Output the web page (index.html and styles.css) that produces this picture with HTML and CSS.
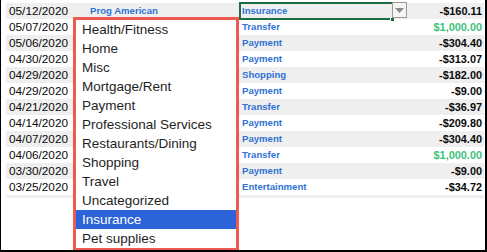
FILE: index.html
```html
<!DOCTYPE html>
<html>
<head>
<meta charset="utf-8">
<link rel="stylesheet" href="styles.css">
</head>
<body>
<div class="frame">
  <div class="sheet">
    <div class="row odd"><span class="date">05/12/2020</span><span class="name">Prog American</span><span class="cat">Insurance</span><span class="amt">-$160.11</span></div>
    <div class="row"><span class="date">05/07/2020</span><span class="name"></span><span class="cat">Transfer</span><span class="amt pos">$1,000.00</span></div>
    <div class="row odd"><span class="date">05/06/2020</span><span class="name"></span><span class="cat">Payment</span><span class="amt">-$304.40</span></div>
    <div class="row"><span class="date">04/30/2020</span><span class="name"></span><span class="cat">Payment</span><span class="amt">-$313.07</span></div>
    <div class="row odd"><span class="date">04/29/2020</span><span class="name"></span><span class="cat">Shopping</span><span class="amt">-$182.00</span></div>
    <div class="row"><span class="date">04/29/2020</span><span class="name"></span><span class="cat">Payment</span><span class="amt">-$9.00</span></div>
    <div class="row odd"><span class="date">04/21/2020</span><span class="name"></span><span class="cat">Transfer</span><span class="amt">-$36.97</span></div>
    <div class="row"><span class="date">04/14/2020</span><span class="name"></span><span class="cat">Payment</span><span class="amt">-$209.80</span></div>
    <div class="row odd"><span class="date">04/07/2020</span><span class="name"></span><span class="cat">Payment</span><span class="amt">-$304.40</span></div>
    <div class="row"><span class="date">04/06/2020</span><span class="name"></span><span class="cat">Transfer</span><span class="amt pos">$1,000.00</span></div>
    <div class="row odd"><span class="date">03/30/2020</span><span class="name"></span><span class="cat">Payment</span><span class="amt">-$9.00</span></div>
    <div class="row"><span class="date">03/25/2020</span><span class="name"></span><span class="cat">Entertainment</span><span class="amt">-$34.72</span></div>
    <div class="row odd stub"></div>
  </div>

  <div class="selection">
    <span class="handle"></span>
  </div>
  <div class="ddbtn"><svg width="9" height="5" viewBox="0 0 9 5"><path d="M0 0H9L4.5 5Z" fill="#8a8a8a"/></svg></div>

  <ul class="menu">
    <li>Health/Fitness</li>
    <li>Home</li>
    <li>Misc</li>
    <li>Mortgage/Rent</li>
    <li>Payment</li>
    <li>Professional Services</li>
    <li>Restaurants/Dining</li>
    <li>Shopping</li>
    <li>Travel</li>
    <li>Uncategorized</li>
    <li class="active">Insurance</li>
    <li>Pet supplies</li>
  </ul>
</div>
</body>
</html>
```
FILE: styles.css
```css
html, body {
  margin: 0;
  padding: 0;
  background: #fff;
}
.frame {
  position: relative;
  width: 487px;
  height: 252px;
  box-sizing: border-box;
  border-left: 1px solid #000;
  border-right: 2px solid #000;
  border-bottom: 2px solid #000;
  overflow: hidden;
  font-family: "Liberation Sans", Arial, sans-serif;
}
.sheet {
  display: flex;
  flex-direction: column;
  padding: 3px 1px 0 5px;
}
.row {
  display: grid;
  grid-template-columns: 81px 152px 1fr auto;
  height: 16px;
  line-height: 16px;
  align-items: center;
}
.row.odd {
  background: #efefef;
}
.row.stub {
  height: 3px;
}
.date {
  padding-left: 3px;
  font-size: 11.8px;
  color: #0a0a0a;
}
.name {
  padding-left: 3px;
  font-size: 9.6px;
  font-weight: bold;
  color: #2f73d6;
}
.cat {
  padding-left: 3px;
  font-size: 9.6px;
  font-weight: bold;
  color: #2f73d6;
}
.amt {
  padding-right: 2px;
  text-align: right;
  font-size: 10.9px;
  font-weight: bold;
  color: #0a0a0a;
}
.amt.pos {
  color: #3cc47a;
}
.selection {
  position: absolute;
  left: 238px;
  top: 2px;
  width: 153px;
  height: 18px;
  box-sizing: border-box;
  border-top: 2px solid #1e6e42;
  border-left: 2px solid #1e6e42;
  border-bottom: 2px solid #1e6e42;
}
.handle {
  position: absolute;
  right: -3px;
  bottom: -4px;
  width: 5px;
  height: 5px;
  background: #1e6e42;
  border: 1px solid #fff;
  box-sizing: border-box;
}
.ddbtn {
  position: absolute;
  left: 391px;
  top: 2px;
  width: 15px;
  height: 16px;
  box-sizing: border-box;
  border: 1px solid #9a9a9a;
  background: #f4f4f4;
  display: flex;
  align-items: center;
  justify-content: center;
}
.menu {
  position: absolute;
  left: 72px;
  top: 17px;
  width: 166px;
  height: 234px;
  box-sizing: border-box;
  margin: 0;
  padding: 0;
  list-style: none;
  background: #fff;
  border: 3px solid #ec5a52;
  font-family: "Liberation Sans", Arial, sans-serif;
  font-size: 13.5px;
  color: #1e1e1e;
}
.menu li {
  height: 19px;
  line-height: 19px;
  padding-left: 6px;
}
.menu li.active {
  background: #2d63d8;
  color: #fff;
}
```
